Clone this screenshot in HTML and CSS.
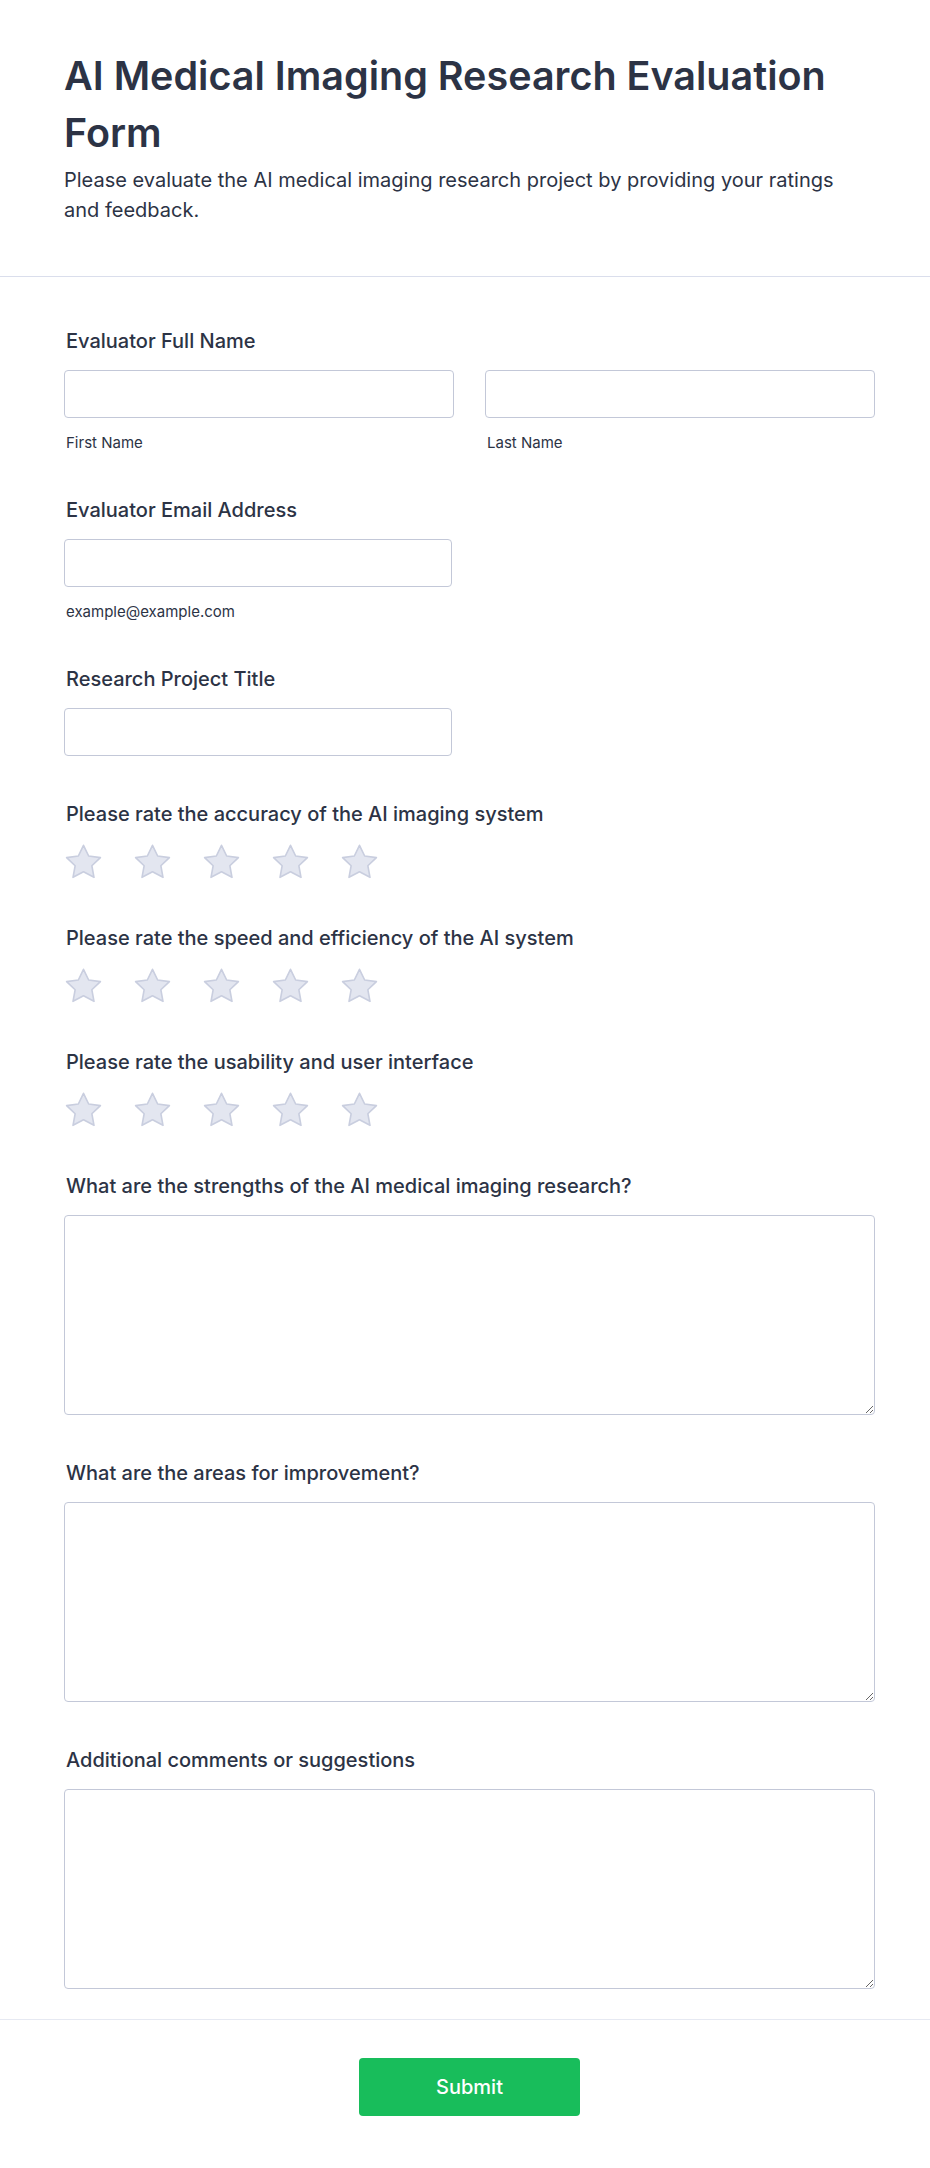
FILE: index.html
```html
<!DOCTYPE html>
<html lang="en">
<head>
<meta charset="utf-8">
<title>AI Medical Imaging Research Evaluation Form</title>
<link rel="stylesheet" href="styles.css">
</head>
<body>
<div class="page">
  <header class="header">
    <h1 class="title">AI Medical Imaging Research Evaluation Form</h1>
    <p class="subtitle">Please evaluate the AI medical imaging research project by providing your ratings and feedback.</p>
  </header>

  <form class="form">
    <div class="field">
      <label class="label">Evaluator Full Name</label>
      <div class="name-grid">
        <div>
          <input class="input" type="text">
          <div class="sublabel">First Name</div>
        </div>
        <div>
          <input class="input" type="text">
          <div class="sublabel">Last Name</div>
        </div>
      </div>
    </div>

    <div class="field">
      <label class="label">Evaluator Email Address</label>
      <input class="input input-half" type="email">
      <div class="sublabel">example@example.com</div>
    </div>

    <div class="field">
      <label class="label">Research Project Title</label>
      <input class="input input-half" type="text">
    </div>

    <div class="field">
      <label class="label">Please rate the accuracy of the AI imaging system</label>
      <div class="stars">
        <svg class="star" viewBox="1.6 1.9 20.8 19.6"><path d="M12 2.6l2.9 6 6.6.9-4.8 4.6 1.2 6.5L12 17.5l-5.9 3.1 1.2-6.5-4.8-4.6 6.6-.9z"/></svg>
        <svg class="star" viewBox="1.6 1.9 20.8 19.6"><path d="M12 2.6l2.9 6 6.6.9-4.8 4.6 1.2 6.5L12 17.5l-5.9 3.1 1.2-6.5-4.8-4.6 6.6-.9z"/></svg>
        <svg class="star" viewBox="1.6 1.9 20.8 19.6"><path d="M12 2.6l2.9 6 6.6.9-4.8 4.6 1.2 6.5L12 17.5l-5.9 3.1 1.2-6.5-4.8-4.6 6.6-.9z"/></svg>
        <svg class="star" viewBox="1.6 1.9 20.8 19.6"><path d="M12 2.6l2.9 6 6.6.9-4.8 4.6 1.2 6.5L12 17.5l-5.9 3.1 1.2-6.5-4.8-4.6 6.6-.9z"/></svg>
        <svg class="star" viewBox="1.6 1.9 20.8 19.6"><path d="M12 2.6l2.9 6 6.6.9-4.8 4.6 1.2 6.5L12 17.5l-5.9 3.1 1.2-6.5-4.8-4.6 6.6-.9z"/></svg>
      </div>
    </div>

    <div class="field">
      <label class="label">Please rate the speed and efficiency of the AI system</label>
      <div class="stars">
        <svg class="star" viewBox="1.6 1.9 20.8 19.6"><path d="M12 2.6l2.9 6 6.6.9-4.8 4.6 1.2 6.5L12 17.5l-5.9 3.1 1.2-6.5-4.8-4.6 6.6-.9z"/></svg>
        <svg class="star" viewBox="1.6 1.9 20.8 19.6"><path d="M12 2.6l2.9 6 6.6.9-4.8 4.6 1.2 6.5L12 17.5l-5.9 3.1 1.2-6.5-4.8-4.6 6.6-.9z"/></svg>
        <svg class="star" viewBox="1.6 1.9 20.8 19.6"><path d="M12 2.6l2.9 6 6.6.9-4.8 4.6 1.2 6.5L12 17.5l-5.9 3.1 1.2-6.5-4.8-4.6 6.6-.9z"/></svg>
        <svg class="star" viewBox="1.6 1.9 20.8 19.6"><path d="M12 2.6l2.9 6 6.6.9-4.8 4.6 1.2 6.5L12 17.5l-5.9 3.1 1.2-6.5-4.8-4.6 6.6-.9z"/></svg>
        <svg class="star" viewBox="1.6 1.9 20.8 19.6"><path d="M12 2.6l2.9 6 6.6.9-4.8 4.6 1.2 6.5L12 17.5l-5.9 3.1 1.2-6.5-4.8-4.6 6.6-.9z"/></svg>
      </div>
    </div>

    <div class="field">
      <label class="label">Please rate the usability and user interface</label>
      <div class="stars">
        <svg class="star" viewBox="1.6 1.9 20.8 19.6"><path d="M12 2.6l2.9 6 6.6.9-4.8 4.6 1.2 6.5L12 17.5l-5.9 3.1 1.2-6.5-4.8-4.6 6.6-.9z"/></svg>
        <svg class="star" viewBox="1.6 1.9 20.8 19.6"><path d="M12 2.6l2.9 6 6.6.9-4.8 4.6 1.2 6.5L12 17.5l-5.9 3.1 1.2-6.5-4.8-4.6 6.6-.9z"/></svg>
        <svg class="star" viewBox="1.6 1.9 20.8 19.6"><path d="M12 2.6l2.9 6 6.6.9-4.8 4.6 1.2 6.5L12 17.5l-5.9 3.1 1.2-6.5-4.8-4.6 6.6-.9z"/></svg>
        <svg class="star" viewBox="1.6 1.9 20.8 19.6"><path d="M12 2.6l2.9 6 6.6.9-4.8 4.6 1.2 6.5L12 17.5l-5.9 3.1 1.2-6.5-4.8-4.6 6.6-.9z"/></svg>
        <svg class="star" viewBox="1.6 1.9 20.8 19.6"><path d="M12 2.6l2.9 6 6.6.9-4.8 4.6 1.2 6.5L12 17.5l-5.9 3.1 1.2-6.5-4.8-4.6 6.6-.9z"/></svg>
      </div>
    </div>

    <div class="field">
      <label class="label">What are the strengths of the AI medical imaging research?</label>
      <textarea class="textarea"></textarea>
    </div>

    <div class="field">
      <label class="label">What are the areas for improvement?</label>
      <textarea class="textarea"></textarea>
    </div>

    <div class="field">
      <label class="label">Additional comments or suggestions</label>
      <textarea class="textarea"></textarea>
    </div>
  </form>

  <footer class="footer">
    <button class="submit" type="button">Submit</button>
  </footer>
</div>
</body>
</html>
```

FILE: styles.css
```css
* {
  box-sizing: border-box;
}

html, body {
  margin: 0;
  padding: 0;
  background: #ffffff;
}

body {
  font-family: Inter, "Noto Sans", "Liberation Sans", sans-serif;
  color: #2c3345;
}

.page {
  width: 930px;
  min-height: 2168px;
  background: #ffffff;
}

.header {
  padding: 48px 64px 51px 64px;
  border-bottom: 1px solid #dadeec;
}

.title {
  margin: 0;
  font-size: 39.5px;
  line-height: 57px;
  font-weight: 600;
  color: #2c3345;
}

.subtitle {
  margin: 3px 0 0 0;
  font-size: 20px;
  line-height: 30px;
  font-weight: 400;
  color: #2c3345;
}

.form {
  padding: 53px 55px 30px 64px;
  display: flex;
  flex-direction: column;
  gap: 47px;
}

.field {
  display: flex;
  flex-direction: column;
}

.label {
  display: block;
  padding-left: 2px;
  font-size: 20px;
  line-height: 22px;
  font-weight: 500;
  color: #2c3345;
  margin-bottom: 18px;
}

.name-grid {
  display: grid;
  grid-template-columns: 390px 390px;
  column-gap: 31px;
}

.input {
  display: block;
  width: 100%;
  height: 48px;
  border: 1px solid #c3c8d8;
  border-radius: 4px;
  background: #ffffff;
  font-family: inherit;
  font-size: 16px;
  padding: 0 12px;
  outline: none;
}

.input-half {
  width: 388px;
}

.sublabel {
  margin-top: 16px;
  padding-left: 2px;
  font-size: 15px;
  line-height: 18px;
  color: #2c3345;
}

.stars {
  display: flex;
  gap: 32px;
  height: 37px;
  align-items: center;
  padding-left: 1px;
}

.star {
  width: 37px;
  height: 35px;
  display: block;
}

.star path {
  fill: #e3e6f0;
  stroke: #c9cedf;
  stroke-width: 0.9;
  stroke-linejoin: round;
}

.textarea {
  display: block;
  width: 811px;
  height: 200px;
  border: 1px solid #c3c8d8;
  border-radius: 4px;
  background: #ffffff;
  font-family: inherit;
  font-size: 16px;
  padding: 10px 12px;
  resize: vertical;
  outline: none;
}

.footer {
  border-top: 1px solid #e6e9f2;
  padding: 38px 55px 50px 64px;
  display: flex;
  justify-content: center;
}

.submit {
  width: 221px;
  height: 58px;
  border: none;
  border-radius: 4px;
  background: #18bd5b;
  color: #ffffff;
  font-family: inherit;
  font-size: 20px;
  font-weight: 500;
  cursor: pointer;
}
```
